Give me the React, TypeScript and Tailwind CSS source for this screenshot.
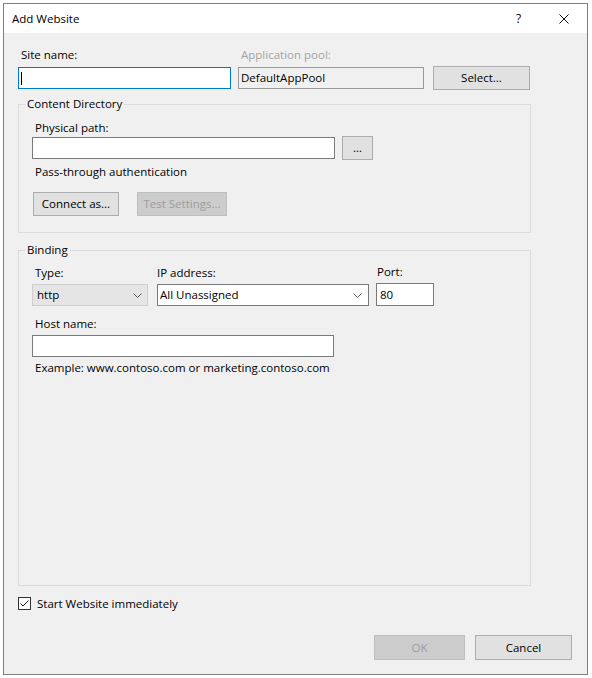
import React from 'react'

const font = "font-['Open_Sans','Noto_Sans',sans-serif]"

function Chevron() {
  return (
    <svg width="9" height="5" viewBox="0 0 9 5" className="shrink-0">
      <polyline points="0.5,0.5 4.5,4.5 8.5,0.5" fill="none" stroke="#5a5a5a" strokeWidth="1" />
    </svg>
  )
}

function Button({ children, className = '', disabled = false }: { children: React.ReactNode; className?: string; disabled?: boolean }) {
  return (
    <div
      className={
        'flex items-center justify-center border ' +
        (disabled ? 'bg-[#cccccc] border-[#bfbfbf] text-[#9d9d9d] ' : 'bg-[#e1e1e1] border-[#adadad] text-black ') +
        className
      }
    >
      {children}
    </div>
  )
}

export default function App() {
  return (
    <div className={`w-[592px] h-[678px] bg-white pt-[3px] pl-[3px] text-[11.5px] leading-[16px] text-black ${font}`}>
      <div className="w-[585px] h-[672px] border border-[#7f7f7f] bg-[#f0f0f0] flex flex-col">
        {/* title bar */}
        <div className="h-[29px] bg-white flex items-center shrink-0">
          <span className="pl-[8px]">Add Website</span>
          <div className="ml-auto flex h-full">
            <div className="w-[45px] flex items-center justify-center text-[12px]">?</div>
            <div className="w-[46px] flex items-center justify-center">
              <svg width="10" height="10" viewBox="0 0 10 10">
                <path d="M0.5 0.5 L9.5 9.5 M9.5 0.5 L0.5 9.5" stroke="#111" strokeWidth="1" fill="none" />
              </svg>
            </div>
          </div>
        </div>

        <div className="flex-1 flex flex-col pl-[14px] pt-[14px]">
          {/* site name / app pool */}
          <div className="flex items-end">
            <div className="flex flex-col w-[213px]">
              <span className="pl-[3px]">Site name:</span>
              <div className="mt-[4px] h-[22px] border border-[#0078d7] bg-white flex items-center pl-[2px]">
                <span className="w-px h-[13px] bg-black" />
              </div>
            </div>
            <div className="flex flex-col w-[186px] ml-[7px]">
              <span className="pl-[3px] text-[#a3a3a3]">Application pool:</span>
              <div className="mt-[4px] h-[22px] border border-[#999999] bg-[#f0f0f0] flex items-center pl-[2px]">
                DefaultAppPool
              </div>
            </div>
            <Button className="ml-[9px] w-[97px] h-[24px] mb-[-1px]">Select...</Button>
          </div>

          {/* content directory */}
          <fieldset className="mt-[7px] w-[513px] border border-[#dcdcdc]">
            <legend className="ml-[6px] px-[2px]">Content Directory</legend>
            <div className="pl-[13px] pt-[8px] pb-[16px] flex flex-col items-start">
              <span className="pl-[3px]">Physical path:</span>
              <div className="flex items-start mt-[1px]">
                <div className="w-[303px] h-[22px] border border-[#7a7a7a] bg-white" />
                <Button className="ml-[7px] w-[31px] h-[24px] mt-[-1px]">...</Button>
              </div>
              <span className="pl-[3px] mt-[4px]">Pass-through authentication</span>
              <div className="flex mt-[12px] pl-[1px]">
                <Button className="w-[86px] h-[24px]">Connect as...</Button>
                <Button disabled className="ml-[18px] w-[90px] h-[24px]">Test Settings...</Button>
              </div>
            </div>
          </fieldset>

          {/* binding */}
          <fieldset className="mt-[9px] w-[513px] border border-[#dcdcdc]">
            <legend className="ml-[6px] px-[2px]">Binding</legend>
            <div className="pl-[13px] pt-[7px] pb-[209px] flex flex-col items-start">
              <div className="flex items-start">
                <div className="flex flex-col w-[116px]">
                  <span className="pl-[3px]">Type:</span>
                  <div className="mt-[3px] h-[22px] border border-[#cfcfcf] bg-[#e5e5e5] flex items-center pl-[4px] pr-[5px]">
                    <span className="flex-1">http</span>
                    <Chevron />
                  </div>
                </div>
                <div className="flex flex-col w-[212px] ml-[9px]">
                  <span>IP address:</span>
                  <div className="mt-[3px] h-[22px] border border-[#7a7a7a] bg-white flex items-center pl-[2px] pr-[6px]">
                    <span className="flex-1">All Unassigned</span>
                    <Chevron />
                  </div>
                </div>
                <div className="flex flex-col w-[58px] ml-[7px] mt-[-1px]">
                  <span className="pl-[1px]">Port:</span>
                  <div className="mt-[3px] h-[23px] border border-[#7a7a7a] bg-white flex items-center pl-[3px]">80</div>
                </div>
              </div>
              <span className="pl-[3px] mt-[10px]">Host name:</span>
              <div className="mt-[3px] w-[302px] h-[22px] border border-[#7a7a7a] bg-white" />
              <span className="pl-[3px] mt-[3px]">Example: www.contoso.com or marketing.contoso.com</span>
            </div>
          </fieldset>

          {/* start checkbox */}
          <div className="flex items-center h-[13px] mt-[11px]">
            <div className="w-[13px] h-[13px] border border-[#333333] bg-white flex items-center justify-center">
              <svg width="11" height="11" viewBox="0 0 11 11">
                <polyline points="1.5,5.5 4,8 9.5,2.5" fill="none" stroke="#222" strokeWidth="1" />
              </svg>
            </div>
            <span className="ml-[6px]">Start Website immediately</span>
          </div>

          {/* dialog buttons */}
          <div className="flex justify-end gap-[10px] pr-[15px] mt-[25px]">
            <Button disabled className="w-[91px] h-[25px]">OK</Button>
            <Button className="w-[97px] h-[25px]">Cancel</Button>
          </div>
        </div>
      </div>
    </div>
  )
}
